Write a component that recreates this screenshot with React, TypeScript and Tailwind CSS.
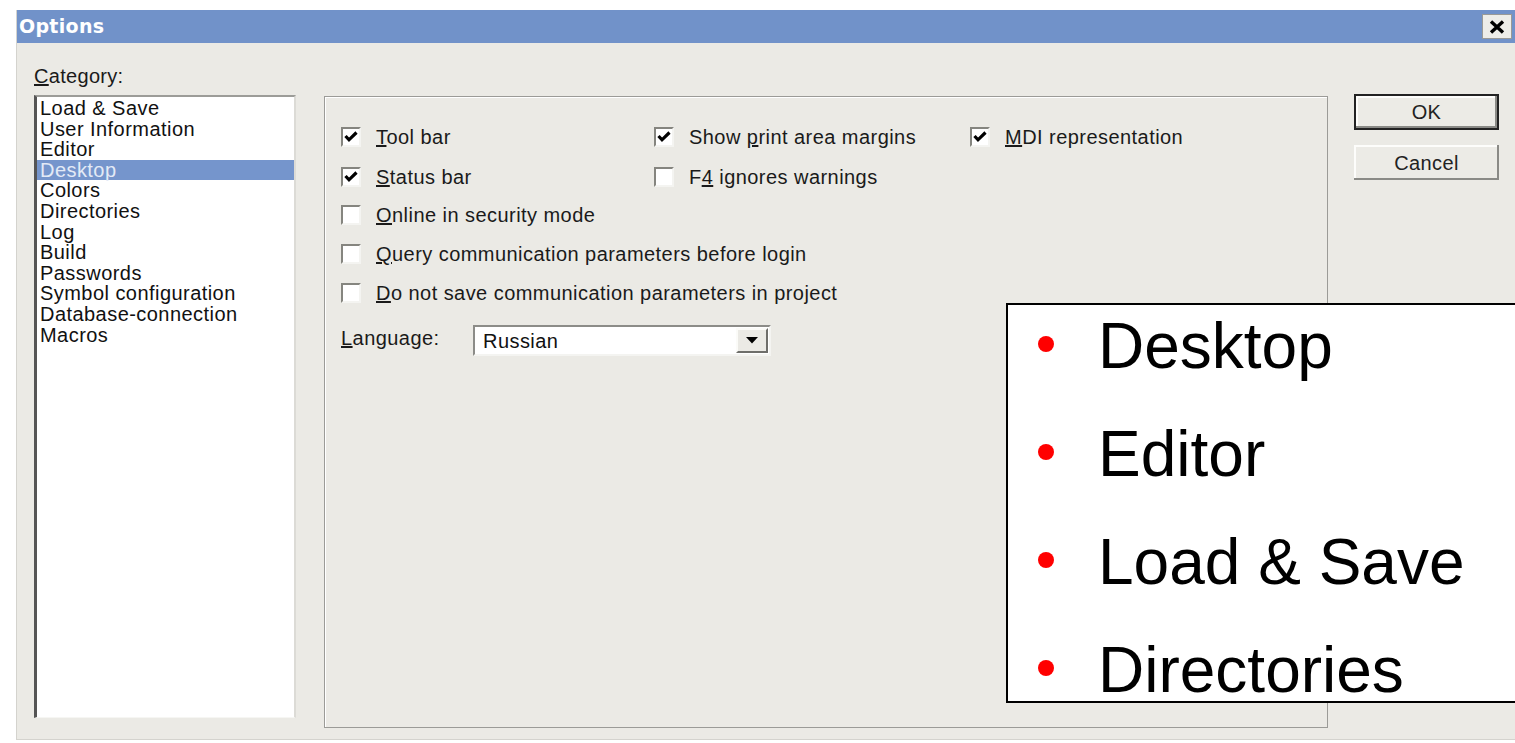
import React from "react";

const ui = { fontFamily: '"Liberation Sans", Arial, sans-serif' };

const categories = [
  "Load & Save",
  "User Information",
  "Editor",
  "Desktop",
  "Colors",
  "Directories",
  "Log",
  "Build",
  "Passwords",
  "Symbol configuration",
  "Database-connection",
  "Macros",
];

function CheckBox({ checked }: { checked: boolean }) {
  return (
    <span className="w-[20px] h-[20px] shrink-0 bg-white border-2 border-t-[#85857f] border-l-[#85857f] border-b-[#f4f4f1] border-r-[#f4f4f1] flex items-center justify-center">
      {checked && (
        <svg width="14" height="12" viewBox="0 0 14 12">
          <path d="M1.5 5 L5 8.8 L12.5 1.5" fill="none" stroke="#000" strokeWidth="3.2" />
        </svg>
      )}
    </span>
  );
}

function Option({
  checked,
  children,
  width,
}: {
  checked: boolean;
  children: React.ReactNode;
  width?: string;
}) {
  return (
    <div className={`flex items-center gap-[15px] ${width ?? ""}`}>
      <CheckBox checked={checked} />
      <span className="text-[20px] leading-[22px] tracking-[0.45px] text-[#1a1a1a]">{children}</span>
    </div>
  );
}

export default function App() {
  return (
    <div className="relative w-[1515px] h-[743px] bg-white overflow-hidden" style={ui}>
      <div className="ml-[16px] mt-[10px] h-[730px] flex flex-col bg-[#ebeae5] border-l border-b border-[#d4d3ce]">
        {/* title bar */}
        <div className="h-[33px] shrink-0 bg-[#7192c9] flex items-center justify-between pl-[2px] pr-[3px]">
          <span
            className="text-[19px] font-bold text-white tracking-[0.3px]"
            style={{ fontFamily: '"DejaVu Sans", Verdana, sans-serif' }}
          >
            Options
          </span>
          <span className="w-[30px] h-[25px] bg-[#eeede8] border border-[#9a9a96] flex items-center justify-center">
            <svg width="16" height="14" viewBox="0 0 16 14">
              <path d="M2 1.5 L14 12.5 M14 1.5 L2 12.5" stroke="#000" strokeWidth="3.4" />
            </svg>
          </span>
        </div>

        {/* body */}
        <div className="flex flex-1 pl-[17px]">
          {/* category column */}
          <div className="flex flex-col w-[262px] shrink-0">
            <div className="mt-[23px] h-[20px] text-[20px] leading-[20px] tracking-[0.3px] text-[#1a1a1a]">
              <u>C</u>ategory:
            </div>
            <div className="mt-[9px] h-[623px] bg-white border-t-2 border-l-[3px] border-b border-r-2 border-t-[#9c9c98] border-l-[#555] border-b-[#f6f6f3] border-r-[#dcdbd6] pt-[1px]">
              {categories.map((c) => (
                <div
                  key={c}
                  className={`h-[20.6px] leading-[20.6px] text-[20px] tracking-[0.45px] pl-[3px] ${
                    c === "Desktop" ? "bg-[#7595cc] text-[#e3eaf6]" : "text-[#111]"
                  }`}
                >
                  {c}
                </div>
              ))}
            </div>
          </div>

          {/* settings panel */}
          <div className="ml-[28px] mt-[53px] w-[1004px] h-[632px] border border-[#9b9b97] shadow-[inset_1px_1px_0_#ffffff] pl-[16px] pt-[29px] flex flex-col">
            <div className="flex items-center h-[22px]">
              <Option checked width="w-[313px]">
                <u>T</u>ool bar
              </Option>
              <Option checked width="w-[316px]">
                Show <u>p</u>rint area margins
              </Option>
              <Option checked>
                <u>M</u>DI representation
              </Option>
            </div>
            <div className="flex items-center h-[22px] mt-[18px]">
              <Option checked width="w-[313px]">
                <u>S</u>tatus bar
              </Option>
              <Option checked={false}>
                F<u>4</u> ignores warnings
              </Option>
            </div>
            <div className="flex items-center h-[22px] mt-[16px]">
              <Option checked={false}>
                <u>O</u>nline in security mode
              </Option>
            </div>
            <div className="flex items-center h-[22px] mt-[17px]">
              <Option checked={false}>
                <u>Q</u>uery communication parameters before login
              </Option>
            </div>
            <div className="flex items-center h-[22px] mt-[17px]">
              <Option checked={false}>
                <u>D</u>o not save communication parameters in project
              </Option>
            </div>
            <div className="flex items-center mt-[21px]">
              <span className="w-[132px] text-[20px] leading-[22px] tracking-[0.45px] text-[#1a1a1a] -mt-[6px]">
                <u>L</u>anguage:
              </span>
              <div className="w-[298px] h-[31px] bg-white border-2 border-t-[#8c8c88] border-l-[#8c8c88] border-b-[#f4f4f1] border-r-[#f4f4f1] flex items-center justify-between pl-[8px] pr-[1px]">
                <span className="text-[20px] tracking-[0.45px] text-[#111]">Russian</span>
                <span className="w-[32px] h-[25px] bg-[#ebeae5] border-2 border-t-[#fbfbf8] border-l-[#fbfbf8] border-b-[#6e6e6a] border-r-[#6e6e6a] flex items-center justify-center">
                  <svg width="12" height="7" viewBox="0 0 12 7">
                    <path d="M0 0 H12 L6 6.5 Z" fill="#000" />
                  </svg>
                </span>
              </div>
            </div>
          </div>

          {/* dialog buttons */}
          <div className="ml-[26px] mt-[51px] flex flex-col w-[145px]">
            <button className="h-[36px] border-2 border-[#222] bg-[#ecebe6] text-[20px] tracking-[0.4px] text-[#222] shadow-[inset_-2px_-2px_0_#8a8a86,inset_2px_2px_0_#fdfdfb]">
              OK
            </button>
            <button className="mt-[15px] h-[35px] bg-[#ecebe6] text-[20px] tracking-[0.4px] text-[#222] shadow-[inset_-2px_-2px_0_#8a8a86,inset_2px_2px_0_#fdfdfb]">
              Cancel
            </button>
          </div>
        </div>
      </div>

      {/* callout box over the dialog */}
      <div className="absolute left-[1006px] top-[303px] w-[512px] h-[400px] bg-white border-2 border-black pt-[1px] flex flex-col gap-[28px]">
        {["Desktop", "Editor", "Load & Save", "Directories"].map((t) => (
          <div key={t} className="h-[80px] flex items-center">
            <span className="ml-[30px] w-[16px] h-[16px] rounded-full bg-[#ff0000] shrink-0 mt-[-4px]" />
            <span className="ml-[44px] text-[64px] leading-[80px] text-black">{t}</span>
          </div>
        ))}
      </div>
    </div>
  );
}
